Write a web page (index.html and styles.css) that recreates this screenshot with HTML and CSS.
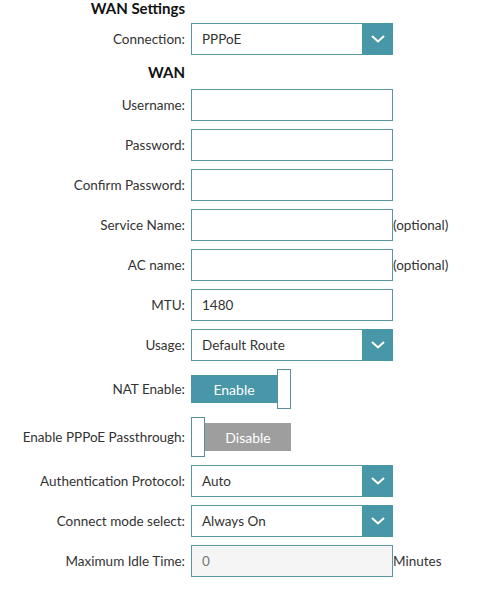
FILE: index.html
```html
<!DOCTYPE html>
<html lang="en">

<head>
  <meta http-equiv="Content-Type" content="text/html;charset=UTF-8" />
  <meta name="viewport" content="width=device-width, initial-scale=1.0" />
  <title>WAN Settings</title>
  <link rel="stylesheet" href="styles.css">
</head>

<body>
  <main class="settings">
    <h2 class="section-title first">WAN Settings</h2>

    <div class="row">
      <label>Connection:</label>
      <div class="select">
        <span class="select-value">PPPoE</span>
        <span class="select-arrow">
          <svg width="14" height="8" viewBox="0 0 14 8"><path d="M1 1 L7 6.5 L13 1" fill="none" stroke="#fff" stroke-width="2" /></svg>
        </span>
      </div>
    </div>

    <h2 class="section-title">WAN</h2>

    <div class="row">
      <label for="username">Username:</label>
      <input id="username" type="text" />
    </div>
    <div class="row">
      <label for="password">Password:</label>
      <input id="password" type="text" />
    </div>
    <div class="row">
      <label for="confirmPassword">Confirm Password:</label>
      <input id="confirmPassword" type="text" />
    </div>
    <div class="row">
      <label for="serviceName">Service Name:</label>
      <input id="serviceName" type="text" />
      <span class="suffix">(optional)</span>
    </div>
    <div class="row">
      <label for="acName">AC name:</label>
      <input id="acName" type="text" />
      <span class="suffix">(optional)</span>
    </div>
    <div class="row">
      <label for="mtu">MTU:</label>
      <input id="mtu" type="text" value="1480" />
    </div>

    <div class="row">
      <label>Usage:</label>
      <div class="select">
        <span class="select-value">Default Route</span>
        <span class="select-arrow">
          <svg width="14" height="8" viewBox="0 0 14 8"><path d="M1 1 L7 6.5 L13 1" fill="none" stroke="#fff" stroke-width="2" /></svg>
        </span>
      </div>
    </div>

    <div class="row toggle-row">
      <label>NAT Enable:</label>
      <div class="toggle">
        <span class="toggle-bar on">Enable</span>
        <span class="toggle-knob"></span>
      </div>
    </div>

    <div class="row toggle-row">
      <label>Enable PPPoE Passthrough:</label>
      <div class="toggle">
        <span class="toggle-knob"></span>
        <span class="toggle-bar off">Disable</span>
      </div>
    </div>

    <div class="row">
      <label>Authentication Protocol:</label>
      <div class="select">
        <span class="select-value">Auto</span>
        <span class="select-arrow">
          <svg width="14" height="8" viewBox="0 0 14 8"><path d="M1 1 L7 6.5 L13 1" fill="none" stroke="#fff" stroke-width="2" /></svg>
        </span>
      </div>
    </div>

    <div class="row">
      <label>Connect mode select:</label>
      <div class="select">
        <span class="select-value">Always On</span>
        <span class="select-arrow">
          <svg width="14" height="8" viewBox="0 0 14 8"><path d="M1 1 L7 6.5 L13 1" fill="none" stroke="#fff" stroke-width="2" /></svg>
        </span>
      </div>
    </div>

    <div class="row">
      <label for="idleTime">Maximum Idle Time:</label>
      <input id="idleTime" type="text" value="0" disabled />
      <span class="suffix">Minutes</span>
    </div>
  </main>
</body>

</html>
```

FILE: styles.css
```css
* {
  box-sizing: border-box;
}

body {
  margin: 0;
  padding: 0;
  background-color: #fff;
  color: #333;
  font-family: "Lato", "Open Sans", sans-serif;
  font-size: 13.5px;
}

.settings {
  width: 480px;
}

/* Headings */
.section-title {
  width: 185px;
  margin: 0 0 8px 0;
  text-align: right;
  font-size: 15px;
  font-weight: bold;
  line-height: 18px;
  color: #111;
}

.section-title.first {
  line-height: 17px;
  margin-bottom: 6px;
}

/* Rows */
.row {
  display: flex;
  align-items: center;
  height: 32px;
  margin-bottom: 8px;
}

.row label {
  flex: none;
  width: 185px;
  margin-right: 6px;
  text-align: right;
}

.toggle-row {
  height: 40px;
}

input[type="text"] {
  width: 202px;
  height: 32px;
  padding: 0 10px;
  border: 1px solid #5a97a5;
  border-radius: 0;
  font-family: inherit;
  font-size: 13.5px;
  color: #333;
  outline: none;
}

input[type="text"]:disabled {
  background-color: #f5f5f5;
  color: #777;
}

.suffix {
  white-space: nowrap;
}

/* Select */
.select {
  display: flex;
  width: 202px;
  height: 32px;
  border: 1px solid #5a97a5;
}

.select-value {
  flex: 1;
  display: flex;
  align-items: center;
  padding-left: 10px;
}

.select-arrow {
  width: 31px;
  margin: -1px -1px -1px 0;
  display: flex;
  align-items: center;
  justify-content: center;
  background-color: #4797a9;
}

/* Toggle */
.toggle {
  display: flex;
  align-items: center;
  width: 100px;
  height: 40px;
}

.toggle-bar {
  width: 86px;
  height: 28px;
  display: flex;
  align-items: center;
  justify-content: center;
  color: #fff;
  font-size: 14px;
}

.toggle-bar.on {
  background-color: #4797a9;
}

.toggle-bar.off {
  background-color: #9e9e9e;
}

.toggle-knob {
  width: 14px;
  height: 40px;
  background: #fff;
  border: 1px solid #5a8f9c;
}
```
